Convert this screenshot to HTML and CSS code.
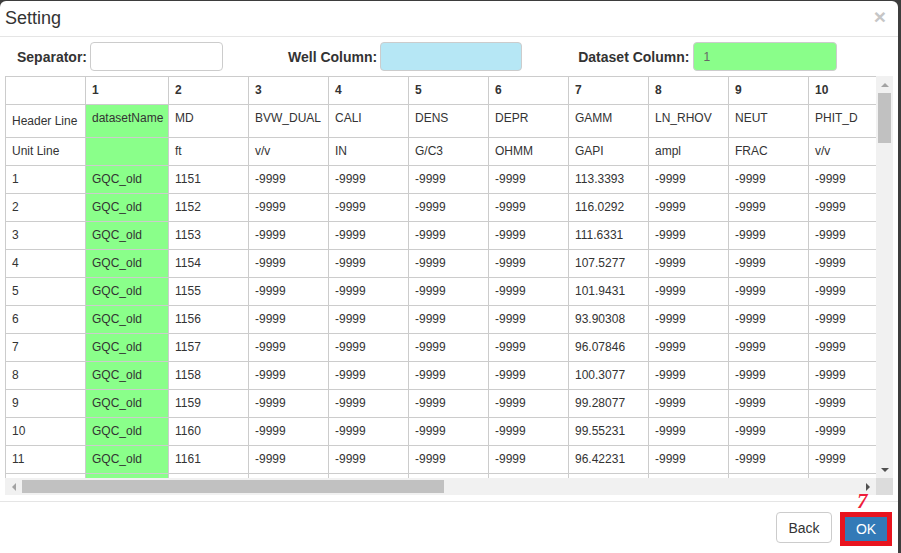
FILE: index.html
```html
<!DOCTYPE html>
<html>
<head>
<meta charset="utf-8">
<link rel="stylesheet" href="styles.css">
</head>
<body>
<div class="modal">
  <div class="modal-header">
    <h4 class="modal-title">Setting</h4>
    <span class="close">×</span>
  </div>
  <div class="modal-body">
    <div class="form-row">
      <div class="group g-sep"><label>Separator:</label><input class="in in-sep" type="text"></div>
      <div class="group g-well"><label>Well Column:</label><input class="in in-well" type="text"></div>
      <div class="group g-ds"><label>Dataset Column:</label><input class="in in-ds" type="text" value="1"></div>
    </div>
    <div class="grid">
      <div class="viewport">
        <table class="data">
          <colgroup>
            <col class="c80"><col class="c83"><col class="c80"><col class="c80"><col class="c80"><col class="c80"><col class="c80"><col class="c80"><col class="c80"><col class="c80"><col class="c80">
          </colgroup>
          <tr class="num"><th></th><th>1</th><th>2</th><th>3</th><th>4</th><th>5</th><th>6</th><th>7</th><th>8</th><th>9</th><th>10</th></tr>
          <tr class="hline"><td class="lbl">Header Line</td><td class="ds">datasetName</td><td>MD</td><td>BVW_DUAL</td><td>CALI</td><td>DENS</td><td>DEPR</td><td>GAMM</td><td>LN_RHOV</td><td>NEUT</td><td>PHIT_D</td></tr>
          <tr><td>Unit Line</td><td class="ds"></td><td>ft</td><td>v/v</td><td>IN</td><td>G/C3</td><td>OHMM</td><td>GAPI</td><td>ampl</td><td>FRAC</td><td>v/v</td></tr>
          <tr><td>1</td><td class="ds">GQC_old</td><td>1151</td><td>-9999</td><td>-9999</td><td>-9999</td><td>-9999</td><td>113.3393</td><td>-9999</td><td>-9999</td><td>-9999</td></tr>
          <tr><td>2</td><td class="ds">GQC_old</td><td>1152</td><td>-9999</td><td>-9999</td><td>-9999</td><td>-9999</td><td>116.0292</td><td>-9999</td><td>-9999</td><td>-9999</td></tr>
          <tr><td>3</td><td class="ds">GQC_old</td><td>1153</td><td>-9999</td><td>-9999</td><td>-9999</td><td>-9999</td><td>111.6331</td><td>-9999</td><td>-9999</td><td>-9999</td></tr>
          <tr><td>4</td><td class="ds">GQC_old</td><td>1154</td><td>-9999</td><td>-9999</td><td>-9999</td><td>-9999</td><td>107.5277</td><td>-9999</td><td>-9999</td><td>-9999</td></tr>
          <tr><td>5</td><td class="ds">GQC_old</td><td>1155</td><td>-9999</td><td>-9999</td><td>-9999</td><td>-9999</td><td>101.9431</td><td>-9999</td><td>-9999</td><td>-9999</td></tr>
          <tr><td>6</td><td class="ds">GQC_old</td><td>1156</td><td>-9999</td><td>-9999</td><td>-9999</td><td>-9999</td><td>93.90308</td><td>-9999</td><td>-9999</td><td>-9999</td></tr>
          <tr><td>7</td><td class="ds">GQC_old</td><td>1157</td><td>-9999</td><td>-9999</td><td>-9999</td><td>-9999</td><td>96.07846</td><td>-9999</td><td>-9999</td><td>-9999</td></tr>
          <tr><td>8</td><td class="ds">GQC_old</td><td>1158</td><td>-9999</td><td>-9999</td><td>-9999</td><td>-9999</td><td>100.3077</td><td>-9999</td><td>-9999</td><td>-9999</td></tr>
          <tr><td>9</td><td class="ds">GQC_old</td><td>1159</td><td>-9999</td><td>-9999</td><td>-9999</td><td>-9999</td><td>99.28077</td><td>-9999</td><td>-9999</td><td>-9999</td></tr>
          <tr><td>10</td><td class="ds">GQC_old</td><td>1160</td><td>-9999</td><td>-9999</td><td>-9999</td><td>-9999</td><td>99.55231</td><td>-9999</td><td>-9999</td><td>-9999</td></tr>
          <tr><td>11</td><td class="ds">GQC_old</td><td>1161</td><td>-9999</td><td>-9999</td><td>-9999</td><td>-9999</td><td>96.42231</td><td>-9999</td><td>-9999</td><td>-9999</td></tr>
          <tr><td></td><td class="ds"></td><td></td><td></td><td></td><td></td><td></td><td></td><td></td><td></td><td></td></tr>
        </table>
      </div>
      <div class="vbar">
        <div class="sbtn"><span class="tri-up"></span></div>
        <div class="vthumb"></div>
        <div class="vspace"></div>
        <div class="sbtn"><span class="tri-down"></span></div>
      </div>
      <div class="hbar">
        <div class="sbtn"><span class="tri-left"></span></div>
        <div class="hthumb"></div>
        <div class="hspace"></div>
        <div class="sbtn"><span class="tri-right"></span></div>
      </div>
      <div class="corner"></div>
    </div>
  </div>
  <div class="modal-footer">
    <span class="mark">7</span>
    <button class="btn btn-back">Back</button>
    <span class="hl"><button class="btn btn-ok">OK</button></span>
  </div>
</div>
</body>
</html>
```
FILE: styles.css
```css
html, body {
  margin: 0;
  padding: 0;
}
body {
  background: #3d3d3d;
  width: 901px;
  height: 553px;
  overflow: hidden;
  font-family: "Liberation Sans", Arial, sans-serif;
  color: #333;
}
.modal {
  margin-top: 1px;
  width: 898px;
  height: 552px;
  background: #fff;
  border-radius: 6px 6px 0 0;
  display: flex;
  flex-direction: column;
  position: relative;
}
.modal-header {
  display: flex;
  justify-content: space-between;
  align-items: flex-start;
  height: 20px;
  padding: 7px 12px 8px 5px;
  border-bottom: 1px solid #e5e5e5;
}
.modal-title {
  margin: 0;
  font-size: 18px;
  line-height: 20px;
  font-weight: normal;
  color: #333;
}
.close {
  font-size: 21px;
  font-weight: bold;
  line-height: 18px;
  color: #c6c6c6;
}
.modal-body {
  padding: 0 5px 6px 5px;
}
.form-row {
  display: flex;
  align-items: center;
  height: 39px;
  padding-left: 12px;
}
.group {
  display: flex;
  align-items: center;
}
.group label {
  font-size: 14px;
  font-weight: bold;
  color: #333;
  margin-right: 3px;
}
.g-well { margin-left: 65px; }
.g-ds { margin-left: 56px; }
.g-ds label { margin-right: 4px; }
.in {
  box-sizing: border-box;
  height: 29px;
  border: 1px solid #ccc;
  border-radius: 4px;
  font-family: "Liberation Sans", Arial, sans-serif;
  font-size: 12px;
  color: #666;
  padding: 0 9px;
  outline: none;
}
.in-sep { width: 133px; background: #fff; }
.in-well { width: 142px; background: #b6e7f5; }
.in-ds { width: 144px; background: #8afe8a; }

.grid {
  display: grid;
  grid-template-columns: 871px 17px;
  grid-template-rows: 402px 17px;
}
.viewport {
  overflow: hidden;
}
.data {
  border-collapse: collapse;
  table-layout: fixed;
  width: 883px;
  font-size: 12px;
  color: #333;
}
.c80 { width: 80px; }
.c83 { width: 83px; }
.data th, .data td {
  border: 1px solid #ccc;
  padding: 0 6px;
  line-height: 17px;
  text-align: left;
  vertical-align: middle;
  white-space: nowrap;
  overflow: hidden;
}
.data th {
  font-weight: bold;
}
.data tr { height: 28px; }
.data tr.hline { height: 33px; }
.data tr.hline td {
  vertical-align: top;
  padding-top: 5px;
}
.data tr.hline td.lbl {
  vertical-align: middle;
  padding-top: 0;
}
.data td.ds {
  background: #8aff8a;
}

.vbar {
  background: #f1f1f1;
  display: flex;
  flex-direction: column;
}
.hbar {
  background: #f1f1f1;
  display: flex;
}
.sbtn {
  width: 17px;
  height: 17px;
  flex: none;
  display: flex;
  align-items: center;
  justify-content: center;
}
.vthumb {
  height: 50px;
  margin: 0 2px;
  background: #c1c1c1;
}
.vspace { flex: 1; }
.hthumb {
  width: 422px;
  margin: 2px 0 2px 0;
  background: #c1c1c1;
}
.hspace { flex: 1; }
.corner { background: #dcdcdc; }
.tri-up {
  width: 0; height: 0;
  border-left: 4px solid transparent;
  border-right: 4px solid transparent;
  border-bottom: 4px solid #a3a3a3;
}
.tri-down {
  width: 0; height: 0;
  border-left: 4px solid transparent;
  border-right: 4px solid transparent;
  border-top: 4px solid #505050;
}
.tri-left {
  width: 0; height: 0;
  border-top: 4px solid transparent;
  border-bottom: 4px solid transparent;
  border-right: 4px solid #a3a3a3;
}
.tri-right {
  width: 0; height: 0;
  border-top: 4px solid transparent;
  border-bottom: 4px solid transparent;
  border-left: 4px solid #505050;
}

.modal-footer {
  position: relative;
  flex: 1;
  border-top: 1px solid #e5e5e5;
  display: flex;
  justify-content: flex-end;
  align-items: flex-start;
  gap: 8px;
  padding: 10px 6px 0 0;
}
.btn {
  font-family: "Liberation Sans", Arial, sans-serif;
  font-size: 14px;
  border-radius: 4px;
  cursor: pointer;
}
.btn-back {
  box-sizing: border-box;
  width: 56px;
  height: 31px;
  background: #fff;
  border: 1px solid #ccc;
  color: #333;
  padding: 0;
}
.hl {
  display: block;
  border: 5px solid #e8141f;
}
.btn-ok {
  display: block;
  box-sizing: border-box;
  width: 42px;
  height: 24px;
  background: #337ab7;
  border: none;
  border-radius: 0;
  color: #fff;
  padding: 0;
}
.mark {
  position: absolute;
  left: 857px;
  top: -11px;
  font-family: "Liberation Serif", "Times New Roman", serif;
  font-weight: bold;
  font-style: italic;
  font-size: 21px;
  line-height: 21px;
  color: #ee1c3a;
}
```
